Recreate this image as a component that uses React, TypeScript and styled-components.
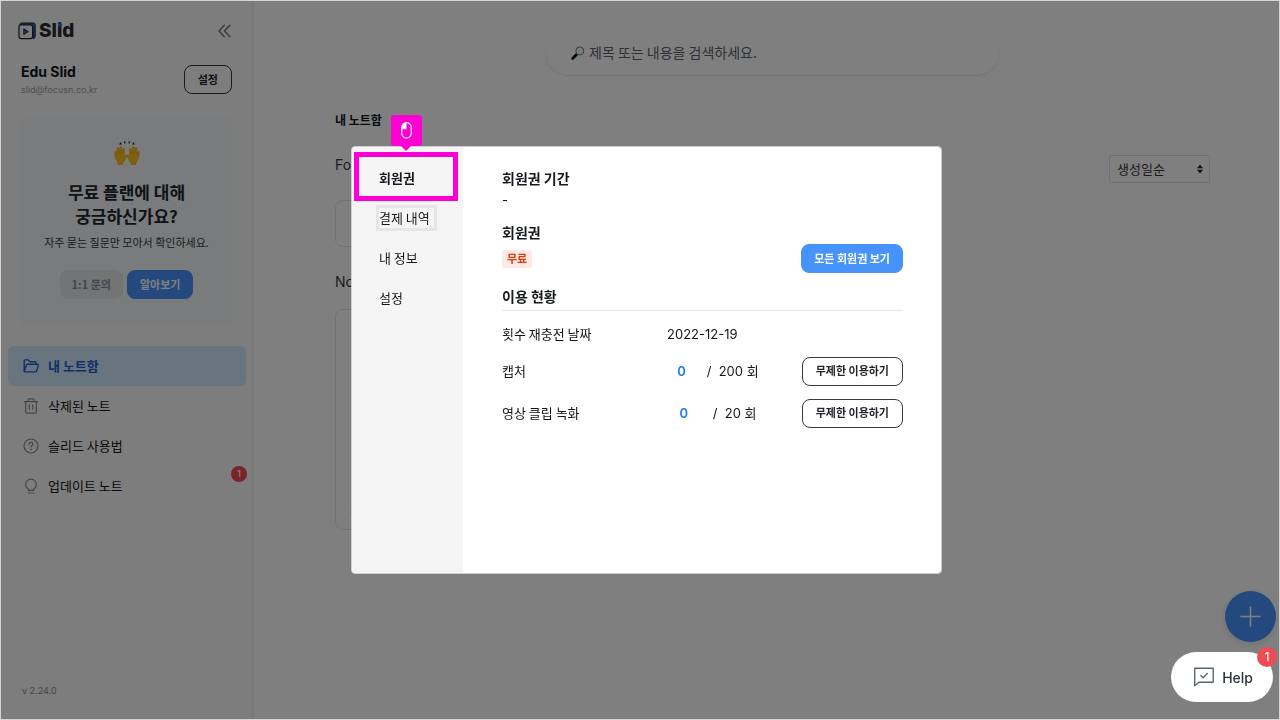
import React from "react";
import styled, { createGlobalStyle } from "styled-components";

const korean = `"Noto Sans CJK KR", Inter, sans-serif`;
const latin = `Inter, "Noto Sans CJK KR", sans-serif`;
const magenta = "#ff00d4";

const GlobalStyle = createGlobalStyle`
  *, *::before, *::after { box-sizing: border-box; }
  body { margin: 0; font-family: ${korean}; font-size: 13px; color: #111418; background: #fff; }
  button, input, select { font-family: inherit; margin: 0; }
  button { cursor: pointer; }
  h1, h2, h3, p { margin: 0; padding: 0; }
  a { color: inherit; text-decoration: none; }
  svg { display: block; flex: none; }
`;

const Page = styled.div`
  display: flex;
  min-height: 100vh;
`;

const Frame = styled.div`
  position: fixed;
  inset: 0;
  z-index: 30;
  border: 1px solid #d3d6d5;
  pointer-events: none;
`;

/* Sidebar */

const Sidebar = styled.aside`
  display: flex;
  flex-direction: column;
  flex: none;
  width: 254px;
  padding: 20px 6px 20px 8px;
  background: #fafafa;
  border-right: 2px solid #f0f0f0;
`;

const SidebarTop = styled.div`
  display: flex;
  align-items: center;
  justify-content: space-between;
  height: 22px;
  padding: 0 14px 0 10px;
`;

const Logo = styled.a`
  display: flex;
  align-items: center;
  gap: 3px;
  font-family: ${latin};
  font-size: 19px;
  line-height: 22px;
  font-weight: 800;
  color: #2a2a2e;
`;

const DottedLetter = styled.span`
  position: relative;

  &::before {
    content: "";
    position: absolute;
    top: 4px;
    left: 1px;
    width: 4px;
    height: 4px;
    border-radius: 50%;
    background: #2467d8;
  }
`;

const IconButton = styled.button`
  display: flex;
  padding: 0;
  border: 0;
  background: none;
  color: #6f7780;
`;

const Profile = styled.div`
  display: flex;
  align-items: flex-start;
  justify-content: space-between;
  margin-top: 23px;
  padding: 0 14px 0 13px;
`;

const ProfileName = styled.p`
  font-family: ${latin};
  font-size: 14px;
  line-height: 14px;
  font-weight: 700;
`;

const ProfileMail = styled.p`
  font-family: ${latin};
  font-size: 9px;
  line-height: 22px;
  color: #9a9ea4;
`;

type Tone = "outline" | "primary" | "muted";

const tones: Record<Tone, string> = {
  outline: "padding: 0 13px 2px; background: transparent; color: #212529; border: 1px solid #343a40;",
  primary: "padding: 0 12px 2px; background: #4693fc; color: #fff; border: 1px solid #4693fc;",
  muted: "padding: 0 11px 2px; background: #e4e9ed; color: #868e96; border: 1px solid #e4e9ed;",
};

const Button = styled.button<{ $tone: Tone }>`
  height: 29px;
  border-radius: 8px;
  font-size: 11px;
  line-height: 16px;
  font-weight: 700;
  white-space: nowrap;
  ${(p) => tones[p.$tone]}
`;

const Promo = styled.section`
  display: flex;
  flex-direction: column;
  align-items: center;
  margin: 16px 13px 0 12px;
  padding: 22px 0 26px;
  border-radius: 7px;
  background: #f3f6f9;
  text-align: center;
`;

const PromoTitle = styled.h2`
  margin-top: 13px;
  font-size: 17px;
  line-height: 24px;
  font-weight: 700;
  color: #212529;
`;

const PromoText = styled.p`
  margin-top: 4px;
  font-size: 11px;
  line-height: 20px;
  color: #343a40;
`;

const PromoActions = styled.div`
  display: flex;
  gap: 4px;
  margin-top: 18px;
`;

const Nav = styled.nav`
  margin-top: 21px;
`;

const NavItem = styled.a<{ $active?: boolean }>`
  position: relative;
  display: flex;
  align-items: center;
  gap: 9px;
  height: 40px;
  padding-left: 15px;
  border-radius: 6px;
  font-weight: ${(p) => (p.$active ? 700 : 400)};
  color: ${(p) => (p.$active ? "#1c5fd0" : "#111418")};
  background: ${(p) => (p.$active ? "#d0ebff" : "none")};

  svg {
    color: ${(p) => (p.$active ? "#1c5fd0" : "#868e96")};
  }
`;

const NavLabel = styled.span`
  padding-bottom: 2px;
`;

const Badge = styled.span<{ $size: number; $top: number; $right: number }>`
  position: absolute;
  top: ${(p) => p.$top}px;
  right: ${(p) => p.$right}px;
  width: ${(p) => p.$size}px;
  height: ${(p) => p.$size}px;
  border-radius: 50%;
  background: #f04a53;
  color: #fff;
  font-family: ${latin};
  font-size: ${(p) => (p.$size > 16 ? 12 : 9)}px;
  line-height: ${(p) => p.$size}px;
  font-weight: 500;
  text-align: center;
`;

const Version = styled.p`
  margin-top: auto;
  padding-left: 14px;
  font-family: ${latin};
  font-size: 9px;
  line-height: 18px;
  color: #868a8f;
`;

/* Note library */

const Main = styled.main`
  flex: 1;
  min-width: 0;
  padding: 31px 70px 0 81px;
`;

const Search = styled.label`
  display: flex;
  align-items: center;
  gap: 4px;
  width: 453px;
  max-width: 100%;
  height: 44px;
  margin: 0 auto;
  padding: 0 25px;
  border-radius: 22px;
  box-shadow: 0 1px 2px rgba(0, 0, 0, 0.1);
`;

const SearchInput = styled.input`
  flex: 1;
  min-width: 0;
  padding: 0 0 2px;
  border: 0;
  outline: 0;
  background: none;
  font-size: 14px;
  line-height: 20px;

  &::placeholder {
    color: #5c636b;
    opacity: 1;
  }
`;

const LibraryTitle = styled.h1`
  margin-top: 35px;
  font-size: 12px;
  line-height: 20px;
  font-weight: 700;
`;

const SectionBar = styled.div`
  display: flex;
  align-items: flex-start;
  justify-content: space-between;
  height: 28px;
  margin-top: 25px;
`;

const SectionTitle = styled.h2`
  font-family: ${latin};
  font-size: 14px;
  line-height: 20px;
  font-weight: 400;
  color: #343a40;
`;

const SelectBox = styled.div`
  position: relative;

  svg {
    position: absolute;
    top: 9px;
    right: 7px;
    pointer-events: none;
  }
`;

const Select = styled.select`
  appearance: none;
  display: block;
  width: 101px;
  height: 28px;
  padding: 0 20px 2px 7px;
  border: 1px solid #dbe3e6;
  border-radius: 2px;
  background: none;
  font-size: 13px;
  color: #343a40;
`;

const Card = styled.article<{ $height: number }>`
  display: flex;
  align-items: flex-end;
  width: 200px;
  height: ${(p) => p.$height}px;
  margin: 17px 0 25px;
  padding: 10px 14px;
  border: 1px solid #e6e6e6;
  border-radius: 8px;
  font-family: ${latin};
`;

const AddButton = styled.button`
  position: fixed;
  right: 4px;
  bottom: 78px;
  display: flex;
  align-items: center;
  justify-content: center;
  width: 51px;
  height: 51px;
  border: 0;
  border-radius: 50%;
  background: #4693fc;
  color: #fff;
  box-shadow: 0 2px 8px rgba(0, 0, 0, 0.12);
`;

/* Account dialog */

const Backdrop = styled.div`
  position: fixed;
  inset: 0;
  z-index: 10;
  display: flex;
  align-items: center;
  justify-content: center;
  padding-left: 13px;
  background: rgba(0, 0, 0, 0.5);
`;

const Dialog = styled.div`
  display: flex;
  width: 591px;
  min-height: 428px;
  border: 1px solid #d0d0d0;
  border-radius: 4px;
  background: #fff;
  background-clip: padding-box;
`;

const Tabs = styled.div`
  display: flex;
  flex-direction: column;
  flex: none;
  width: 111px;
  padding: 11px 0 0 24px;
  border-radius: 3px 0 0 3px;
  background: #f5f5f5;
`;

const TabSlot = styled.div`
  position: relative;
  display: flex;
  align-items: center;
  height: 40px;
`;

const Tab = styled.button<{ $active?: boolean; $framed?: boolean }>`
  padding: 0 4px 0 0;
  border: 3px solid ${(p) => (p.$framed ? "#e6e6e6" : "transparent")};
  background: none;
  font-size: 13px;
  line-height: 20px;
  font-weight: ${(p) => (p.$active ? 700 : 400)};
  color: #16191d;
  white-space: nowrap;
`;

const Spotlight = styled.div`
  position: absolute;
  top: -6px;
  left: -22px;
  width: 104px;
  height: 49px;
  border: 5px solid ${magenta};
  pointer-events: none;
`;

const Pointer = styled.div`
  position: absolute;
  left: 32px;
  bottom: 50px;
  display: flex;
  align-items: center;
  justify-content: center;
  width: 31px;
  height: 31px;
  border-radius: 3px;
  background: ${magenta};

  &::after {
    content: "";
    position: absolute;
    top: 30px;
    left: 9px;
    border: 6px solid transparent;
    border-top-color: ${magenta};
    border-bottom: 0;
  }
`;

const Panel = styled.div`
  flex: 1;
  min-width: 0;
  padding: 21px 38px 0 39px;
`;

const PanelTitle = styled.h3`
  font-size: 14px;
  line-height: 20px;
  font-weight: 700;
  color: #16191d;
`;

const Period = styled.p`
  margin-bottom: 10px;
  font-family: ${latin};
  line-height: 24px;
`;

const PlanRow = styled.div`
  display: flex;
  align-items: center;
  justify-content: space-between;
  margin: 2px 0 13px;
`;

const PlanTag = styled.span`
  padding: 0 5px 2px;
  border-radius: 3px;
  background: #ffe9e6;
  color: #dd3c06;
  font-size: 11px;
  line-height: 16px;
  font-weight: 700;
`;

const Usage = styled.table`
  width: 100%;
  margin-top: 4px;
  border-top: 1px solid #e6e6e6;
  border-spacing: 0;
  table-layout: fixed;
`;

const UsageRow = styled.tr<{ $tall?: boolean }>`
  height: ${(p) => (p.$tall ? 42 : 39)}px;

  > * {
    padding: ${(p) => (p.$tall ? 0 : 8)}px 0 2px;
  }

  > :last-child {
    padding: 0;
    text-align: right;
  }
`;

const UsageLabel = styled.th`
  width: 165px;
  font-weight: 400;
  text-align: left;
`;

const UsageValue = styled.td`
  width: 102px;
  font-family: ${latin};
  white-space: nowrap;
`;

const Quota = styled.div`
  display: flex;
  align-items: baseline;
  justify-content: space-around;
  white-space: pre;
`;

const Used = styled.strong`
  font-weight: 600;
  color: #1c7ef0;
`;

/* Help launcher */

const HelpButton = styled.button`
  position: fixed;
  right: 7px;
  bottom: 18px;
  z-index: 20;
  display: flex;
  align-items: center;
  gap: 8px;
  height: 50px;
  padding: 0 20px 0 22px;
  border: 0;
  border-radius: 25px;
  background: #fff;
  color: #2b333b;
  font-family: ${latin};
  font-size: 14px;
  font-weight: 500;
`;

const LogoMark = () => (
  <svg width="18" height="18" viewBox="0 0 18 18" fill="none" aria-hidden="true">
    <path d="M3.500 1H15.200A2 2 0 0 1 17.200 3V14.500a2 2 0 0 1-2 2L14.500 3.500 1.800 2.700A2 2 0 0 1 3.500 1Z" fill="#2467d8" stroke="#222226" strokeWidth="1" />
    <rect x="1" y="2.800" width="13.600" height="13.800" rx="2" fill="#f6f6f6" stroke="#222226" strokeWidth="1.200" />
    <path d="M5.800 6.700v5.800l4.600-2.900Z" fill="#2467d8" stroke="#222226" strokeWidth="0.900" strokeLinejoin="round" />
  </svg>
);

const CollapseIcon = () => (
  <svg width="14" height="14" viewBox="0 0 14 14" fill="none" stroke="currentColor" strokeWidth="1.400" strokeLinecap="round" strokeLinejoin="round" aria-hidden="true">
    <path d="M6.300 1.200 1 7l5.300 5.800M11.800 1.200 6.500 7l5.300 5.800" />
  </svg>
);

const HandsIcon = () => (
  <svg width="28" height="28" viewBox="0 0 28 28" aria-hidden="true">
    <path d="M6 5.500 7.800 3l1 2.500ZM10.600 2.500h2l-.6 2.800ZM15.400 2.500h2L16 5.300ZM19.200 5.500l1-2.500L22 5.500Z" fill="#2b2b2b" />
    <g fill="#ffc01e" stroke="#e79a00" strokeWidth="0.500">
      <path d="M5 25.500c.2-1.800-.6-3-1.700-4.800-1-1.700-1.600-4.600-1.700-7.300 0-1.200 1.500-1.300 1.800-.2l.8 3-.4-6.500c0-1.300 1.700-1.500 2-.2l.9 5.500V8.500c.1-1.300 1.900-1.300 2 0l.4 6.500.8-5c.3-1.200 1.800-.9 1.700.3l-.4 6.800c.8-.8 1.600-1.300 2.400-1 .7.300.4 1.100-.1 1.700-1.100 1.300-1.600 4.200-3.100 5.400-.7.600-.6 1.400-.5 2.300Z" />
      <path d="M23 25.500c-.2-1.800.6-3 1.700-4.800 1-1.700 1.600-4.600 1.700-7.300 0-1.200-1.500-1.300-1.800-.2l-.8 3 .4-6.500c0-1.300-1.700-1.500-2-.2l-.9 5.500V8.500c-.1-1.300-1.900-1.300-2 0l-.4 6.500-.8-5c-.3-1.200-1.800-.9-1.700.3l.4 6.800c-.8-.8-1.600-1.300-2.400-1-.7.300-.4 1.100.1 1.700 1.100 1.300 1.600 4.200 3.100 5.400.7.600.6 1.400.5 2.300Z" />
    </g>
  </svg>
);

const FolderIcon = () => (
  <svg width="16" height="16" viewBox="0 0 16 16" fill="none" stroke="currentColor" strokeWidth="1.400" strokeLinejoin="round" aria-hidden="true">
    <path d="M1.200 13.300V2.800c0-.6.300-.9.900-.9h3.200l1.700 1.900h5.100c.6 0 .9.300.9.900v1.700" />
    <path d="M1.200 13.400 3.600 6.700c.1-.3.300-.4.600-.4h10.600c.4 0 .6.300.5.700l-1.700 6.200c-.1.500-.4.700-.9.700H1.600c-.3 0-.5-.2-.4-.5Z" />
  </svg>
);

const TrashIcon = () => (
  <svg width="16" height="16" viewBox="0 0 16 16" fill="none" stroke="currentColor" strokeWidth="1.200" aria-hidden="true">
    <path d="M1 3.700h14M5 3.500V1.800c0-.6.300-.9.900-.9h4.200c.6 0 .9.300.9.900v1.700M2.700 3.700v10.400c0 .7.400 1.100 1.100 1.100h8.400c.7 0 1.100-.4 1.100-1.100V3.700M6.300 6.500v5.200M9.700 6.500v5.200" />
  </svg>
);

const QuestionIcon = () => (
  <svg width="16" height="16" viewBox="0 0 16 16" fill="none" stroke="currentColor" strokeWidth="1.200" strokeLinecap="round" aria-hidden="true">
    <circle cx="8" cy="8" r="7" />
    <path d="M6.100 6.300c0-1.100.8-1.900 1.900-1.900s1.900.7 1.900 1.700c0 1.300-1.800 1.500-1.800 2.900" />
    <path d="M8.100 11.300v.1" strokeWidth="1.500" />
  </svg>
);

const BulbIcon = () => (
  <svg width="16" height="16" viewBox="0 0 16 16" fill="none" stroke="currentColor" strokeWidth="1.200" strokeLinecap="round" aria-hidden="true">
    <path d="M5.400 12.300v-1.400C3.600 9.900 2.700 8.300 2.700 6.400A5.300 5.300 0 0 1 8 1.100a5.300 5.300 0 0 1 5.300 5.300c0 1.900-.9 3.500-2.700 4.500v1.400ZM5.200 15h5.600" />
  </svg>
);

const SearchIcon = () => (
  <svg width="14" height="14" viewBox="0 0 14 14" fill="none" aria-hidden="true">
    <path d="m1.600 12.500 4-4" stroke="#0a0a0a" strokeWidth="2.600" strokeLinecap="round" />
    <circle cx="8.800" cy="5" r="4" fill="#f0f6f9" stroke="#6c7a83" strokeWidth="1" />
    <path d="M6.500 4.600c.3-1.100 1.100-1.800 2.200-1.900" stroke="#fff" strokeWidth="0.800" strokeLinecap="round" />
  </svg>
);

const SortIcon = () => (
  <svg width="6" height="10" viewBox="0 0 6 10" fill="#212529" aria-hidden="true">
    <path d="M3 0.500 6 4.200H0ZM3 9.500 0 5.800h6Z" />
  </svg>
);

const MouseIcon = () => (
  <svg width="11" height="17" viewBox="0 0 11 17" aria-hidden="true">
    <rect x="0.700" y="0.700" width="9.600" height="15.300" rx="4.800" fill="none" stroke="#fff" strokeWidth="1.200" />
    <path d="M5.500.8v6.400H.8V5.500A4.700 4.700 0 0 1 5.500.8Z" fill="#fff" />
  </svg>
);

const PlusIcon = () => (
  <svg width="21" height="21" viewBox="0 0 21 21" stroke="currentColor" strokeWidth="1.600" strokeLinecap="round" aria-hidden="true">
    <path d="M10.500 1v19M1 10.500h19" />
  </svg>
);

const HelpIcon = () => (
  <svg width="21" height="20" viewBox="0 0 21 20" fill="none" stroke="#5b6670" strokeWidth="1.400" strokeLinejoin="round" aria-hidden="true">
    <path d="M1.700 1.300h18.500v14H5.900l-4.200 3.400Z" />
    <path d="m7.500 8.200 2.600 2.600 4.600-4.800" />
  </svg>
);

const navItems = [
  { label: "내 노트함", icon: <FolderIcon />, active: true },
  { label: "삭제된 노트", icon: <TrashIcon /> },
  { label: "슬리드 사용법", icon: <QuestionIcon /> },
  { label: "업데이트 노트", icon: <BulbIcon />, count: 1 },
];

const tabs = [
  { label: "회원권", active: true },
  { label: "결제 내역", framed: true },
  { label: "내 정보" },
  { label: "설정" },
];

const quotas = [
  { label: "캡처", used: 0, total: 200 },
  { label: "영상 클립 녹화", used: 0, total: 20 },
];

export default function App() {
  return (
    <>
      <GlobalStyle />
      <Page>
        <Sidebar>
          <SidebarTop>
            <Logo href="#">
              <LogoMark />
              <span>
                Sl<DottedLetter>i</DottedLetter>d
              </span>
            </Logo>
            <IconButton type="button" aria-label="사이드바 접기">
              <CollapseIcon />
            </IconButton>
          </SidebarTop>
          <Profile>
            <div>
              <ProfileName>Edu Slid</ProfileName>
              <ProfileMail>slid@focusn.co.kr</ProfileMail>
            </div>
            <Button type="button" $tone="outline">설정</Button>
          </Profile>
          <Promo>
            <HandsIcon />
            <PromoTitle>
              무료 플랜에 대해
              <br />
              궁금하신가요?
            </PromoTitle>
            <PromoText>자주 묻는 질문만 모아서 확인하세요.</PromoText>
            <PromoActions>
              <Button type="button" $tone="muted">1:1 문의</Button>
              <Button type="button" $tone="primary">알아보기</Button>
            </PromoActions>
          </Promo>
          <Nav>
            {navItems.map((item) => (
              <NavItem key={item.label} href="#" $active={item.active}>
                {item.icon}
                <NavLabel>{item.label}</NavLabel>
                {item.count && <Badge $size={16} $top={0} $right={-1}>{item.count}</Badge>}
              </NavItem>
            ))}
          </Nav>
          <Version>v 2.24.0</Version>
        </Sidebar>

        <Main>
          <Search>
            <SearchIcon />
            <SearchInput type="text" aria-label="검색" placeholder="제목 또는 내용을 검색하세요." />
          </Search>
          <LibraryTitle>내 노트함</LibraryTitle>
          <SectionBar>
            <SectionTitle>Folder</SectionTitle>
            <SelectBox>
              <Select aria-label="정렬">
                <option>생성일순</option>
              </Select>
              <SortIcon />
            </SelectBox>
          </SectionBar>
          <Card $height={47} />
          <SectionTitle>Note</SectionTitle>
          <Card $height={221}>S</Card>
        </Main>
        <AddButton type="button" aria-label="새 노트">
          <PlusIcon />
        </AddButton>
      </Page>

      <Backdrop>
        <Dialog role="dialog" aria-label="회원권">
          <Tabs role="tablist">
            {tabs.map((tab) => (
              <TabSlot key={tab.label}>
                <Tab type="button" role="tab" aria-selected={!!tab.active} $active={tab.active} $framed={tab.framed}>
                  {tab.label}
                </Tab>
                {tab.active && (
                  <Spotlight>
                    <Pointer>
                      <MouseIcon />
                    </Pointer>
                  </Spotlight>
                )}
              </TabSlot>
            ))}
          </Tabs>
          <Panel role="tabpanel">
            <PanelTitle>회원권 기간</PanelTitle>
            <Period>-</Period>
            <PanelTitle>회원권</PanelTitle>
            <PlanRow>
              <PlanTag>무료</PlanTag>
              <Button type="button" $tone="primary">모든 회원권 보기</Button>
            </PlanRow>
            <PanelTitle>이용 현황</PanelTitle>
            <Usage>
              <tbody>
                <UsageRow>
                  <UsageLabel scope="row">횟수 재충전 날짜</UsageLabel>
                  <UsageValue>2022-12-19</UsageValue>
                  <td />
                </UsageRow>
                {quotas.map((q) => (
                  <UsageRow key={q.label} $tall>
                    <UsageLabel scope="row">{q.label}</UsageLabel>
                    <UsageValue>
                      <Quota>
                        <Used>{q.used}</Used>
                        <span>{`/  ${q.total} 회`}</span>
                      </Quota>
                    </UsageValue>
                    <td>
                      <Button type="button" $tone="outline">무제한 이용하기</Button>
                    </td>
                  </UsageRow>
                ))}
              </tbody>
            </Usage>
          </Panel>
        </Dialog>
      </Backdrop>

      <HelpButton type="button">
        <HelpIcon />
        Help
        <Badge $size={20} $top={-5} $right={-4}>1</Badge>
      </HelpButton>
      <Frame />
    </>
  );
}
